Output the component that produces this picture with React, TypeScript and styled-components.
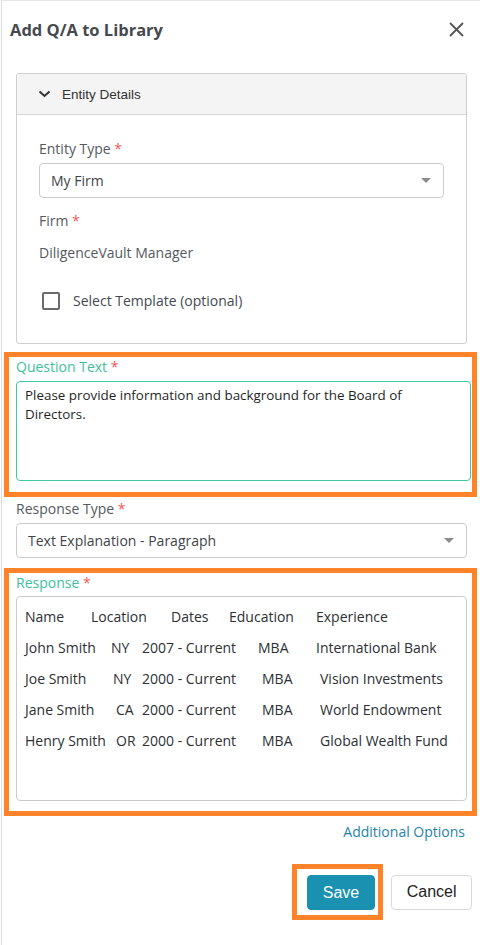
import styled, { createGlobalStyle } from 'styled-components';

const GlobalStyle = createGlobalStyle`
  html, body {
    margin: 0;
    padding: 0;
    background: #ffffff;
  }
  body {
    font-family: "Open Sans", "Liberation Sans", sans-serif;
  }
  * {
    box-sizing: border-box;
  }
`;

const Modal = styled.div`
  width: 479px;
  height: 945px;
  margin-left: 1px;
  border-left: 1px solid #dcdcdc;
  border-top: 1px solid #e6e6e6;
  background: #fff;
  display: flex;
  flex-direction: column;
`;

const Header = styled.div`
  display: flex;
  align-items: center;
  justify-content: space-between;
  height: 57px;
  padding: 0 15px 0 8px;
`;

const Title = styled.h1`
  margin: 0;
  font-family: "Open Sans", sans-serif;
  font-size: 16.5px;
  font-weight: 700;
  color: #464a4f;
`;

const CloseButton = styled.button`
  border: none;
  background: none;
  padding: 0;
  width: 18px;
  height: 18px;
  display: flex;
  align-items: center;
  justify-content: center;
  cursor: pointer;
`;

const Body = styled.div`
  padding: 15px 0 0 14px;
  display: flex;
  flex-direction: column;
`;

const Card = styled.div`
  width: 451px;
  border: 1px solid #cfcfcf;
  border-radius: 3px;
  overflow: hidden;
`;

const CardHeader = styled.div`
  height: 41px;
  background: #f4f4f4;
  border-bottom: 1px solid #d6d6d6;
  display: flex;
  align-items: center;
  gap: 11px;
  padding-left: 21px;
  font-family: "Liberation Sans", Arial, sans-serif;
  font-size: 13.5px;
  color: #333;
`;

const CardBody = styled.div`
  padding: 24px 22px 33px 22px;
  display: flex;
  flex-direction: column;
`;

const Label = styled.div<{ $focus?: boolean }>`
  font-size: 14px;
  line-height: 20px;
  color: ${(p) => (p.$focus ? '#3ec29b' : '#555a60')};
`;

const Star = styled.span`
  color: #f25a5a;
`;

const Select = styled.div<{ $w: number }>`
  margin-top: 4px;
  width: ${(p) => p.$w}px;
  height: 35px;
  border: 1px solid #cccccc;
  border-radius: 4px;
  display: flex;
  align-items: center;
  justify-content: space-between;
  padding: 0 12px 0 11px;
  font-size: 14px;
  color: #3f444a;
`;

const Caret = styled.span`
  width: 0;
  height: 0;
  border-left: 5px solid transparent;
  border-right: 5px solid transparent;
  border-top: 5px solid #8c8c8c;
`;

const Value = styled.div`
  margin-top: 12px;
  font-size: 14px;
  color: #555a60;
`;

const CheckRow = styled.label`
  margin-top: 29px;
  display: flex;
  align-items: center;
  gap: 13px;
  padding-left: 3px;
  font-size: 14px;
  color: #444950;
`;

const Box = styled.span`
  width: 18px;
  height: 18px;
  border: 2px solid #6b6b6b;
  border-radius: 2px;
`;

const Highlight = styled.div<{ $mt: number; $h: number }>`
  margin-top: ${(p) => p.$mt}px;
  margin-left: -12px;
  width: 473px;
  height: ${(p) => p.$h}px;
  border: 5px solid #fe8329;
  padding: 0 0 0 7px;
  display: flex;
  flex-direction: column;
`;

const TextArea = styled.div`
  margin-top: 4px;
  width: 455px;
  height: 100px;
  border: 1px solid #3fc9a0;
  border-radius: 4px;
  padding: 4px 50px 4px 8px;
  font-size: 13.4px;
  line-height: 19px;
  color: #1f1f1f;
`;

const Field = styled.div`
  margin-top: 2px;
  display: flex;
  flex-direction: column;
`;

const ResponseBox = styled.div`
  margin-top: 3px;
  width: 451px;
  height: 205px;
  border: 1px solid #cccccc;
  border-radius: 4px;
  padding: 4px 0 0 8px;
  display: flex;
  flex-direction: column;
`;

const Row = styled.div`
  display: flex;
  height: 31px;
  align-items: center;
  font-size: 14px;
  color: #2d2f33;
  white-space: nowrap;
`;

const Cell = styled.span<{ $w?: number }>`
  flex: none;
  width: ${(p) => (p.$w ? `${p.$w}px` : 'auto')};
`;

const LinkRow = styled.div`
  display: flex;
  justify-content: flex-end;
  padding-right: 15px;
  margin-top: 6px;
  line-height: 20px;
`;

const Link = styled.a`
  font-size: 14px;
  color: #1f83ab;
  text-decoration: none;
  cursor: pointer;
`;

const Footer = styled.div`
  display: flex;
  justify-content: flex-end;
  align-items: center;
  gap: 8px;
  padding-right: 8px;
  margin-top: 22px;
`;

const SaveFrame = styled.div`
  border: 5px solid #fe8329;
  padding: 6px 3px 5px 10px;
`;

const Button = styled.button<{ $primary?: boolean }>`
  height: 35px;
  padding: 0 ${(p) => (p.$primary ? 15 : 14.5)}px;
  border-radius: 4px;
  font-family: "Liberation Sans", Arial, sans-serif;
  font-size: 16px;
  cursor: pointer;
  background: ${(p) => (p.$primary ? '#1a91b1' : '#ffffff')};
  color: ${(p) => (p.$primary ? '#ffffff' : '#1e1e1e')};
  border: 1px solid ${(p) => (p.$primary ? '#1a91b1' : '#dadada')};
`;

type Line = { cells: [string, number?][] };

const rows: Line[] = [
  { cells: [['Name', 66], ['Location', 80], ['Dates', 58], ['Education', 87], ['Experience']] },
  { cells: [['John Smith', 86], ['NY', 31], ['2007 - Current', 116], ['MBA', 58], ['International Bank']] },
  { cells: [['Joe Smith', 88], ['NY', 29], ['2000 - Current', 120], ['MBA', 58], ['Vision Investments']] },
  { cells: [['Jane Smith', 91], ['CA', 26], ['2000 - Current', 120], ['MBA', 58], ['World Endowment']] },
  { cells: [['Henry Smith', 91], ['OR', 26], ['2000 - Current', 120], ['MBA', 58], ['Global Wealth Fund']] },
];

const App = () => {
  return (
    <>
      <GlobalStyle />
      <Modal>
        <Header>
          <Title>Add Q/A to Library</Title>
          <CloseButton aria-label="Close">
            <svg width="15" height="15" viewBox="0 0 15 15">
              <path d="M1 1 L14 14 M14 1 L1 14" stroke="#555" strokeWidth="1.8" />
            </svg>
          </CloseButton>
        </Header>

        <Body>
          <Card>
            <CardHeader>
              <svg width="13" height="8" viewBox="0 0 13 8">
                <path d="M1.5 1.5 L6.5 6 L11.5 1.5" stroke="#333" strokeWidth="2" fill="none" />
              </svg>
              Entity Details
            </CardHeader>
            <CardBody>
              <Label>
                Entity Type <Star>*</Star>
              </Label>
              <Select $w={405}>
                My Firm
                <Caret />
              </Select>
              <Label style={{ marginTop: 13 }}>
                Firm <Star>*</Star>
              </Label>
              <Value>DiligenceVault Manager</Value>
              <CheckRow>
                <Box />
                Select Template (optional)
              </CheckRow>
            </CardBody>
          </Card>

          <Highlight $mt={8} $h={145}>
            <Label $focus>
              Question Text <Star>*</Star>
            </Label>
            <TextArea>Please provide information and background for the Board of Directors.</TextArea>
          </Highlight>

          <Field>
            <Label>
              Response Type <Star>*</Star>
            </Label>
            <Select $w={451}>
              Text Explanation - Paragraph
              <Caret />
            </Select>
          </Field>

          <Highlight $mt={10} $h={248}>
            <Label $focus>
              Response <Star>*</Star>
            </Label>
            <ResponseBox>
              {rows.map((r, i) => (
                <Row key={i}>
                  {r.cells.map(([t, w], j) => (
                    <Cell key={j} $w={w}>
                      {t}
                    </Cell>
                  ))}
                </Row>
              ))}
            </ResponseBox>
          </Highlight>

          <LinkRow>
            <Link>Additional Options</Link>
          </LinkRow>

          <Footer>
            <SaveFrame>
              <Button $primary>Save</Button>
            </SaveFrame>
            <Button>Cancel</Button>
          </Footer>
        </Body>
      </Modal>
    </>
  );
};

export default App;
